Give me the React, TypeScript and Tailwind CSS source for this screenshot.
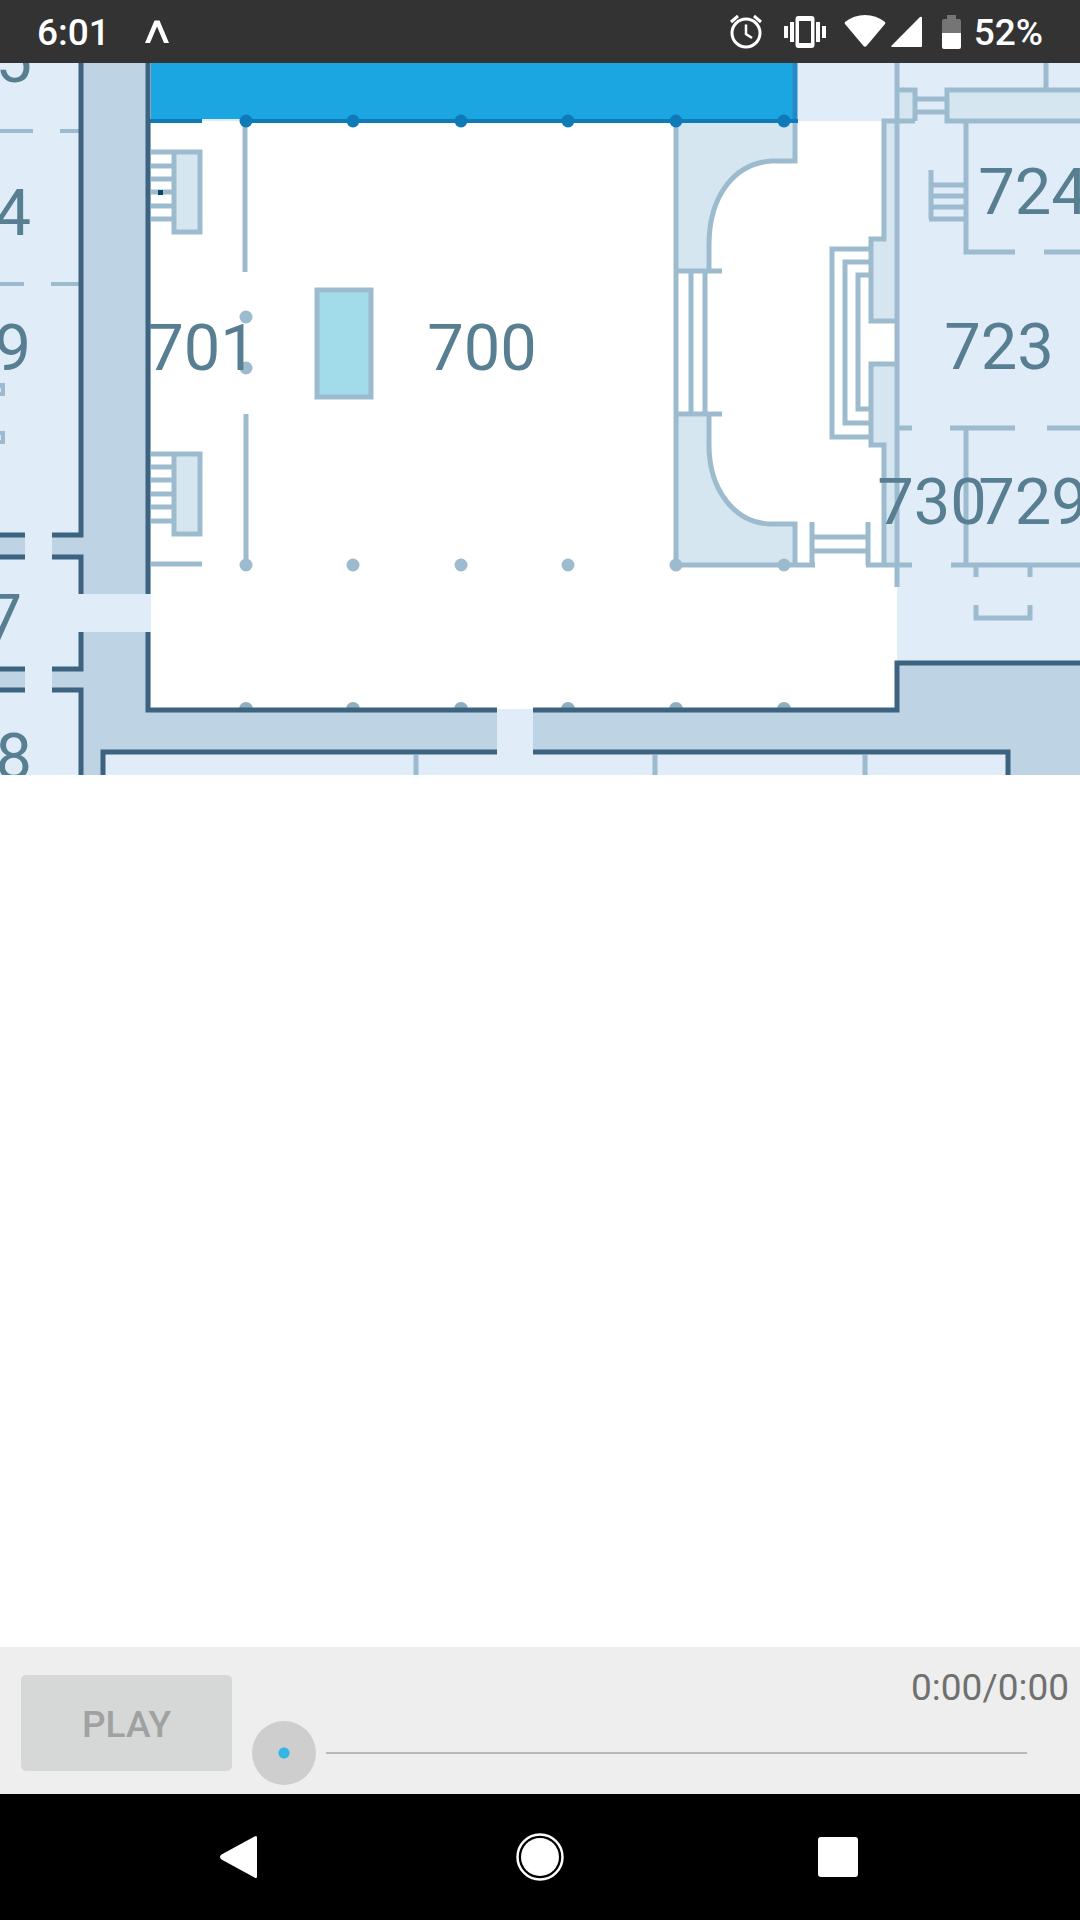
import React from "react";

const COLUMNS = [246, 353, 461, 568, 676, 784];

const ROOMS = [
  { name: "701", x: 202, y: 370 },
  { name: "700", x: 482, y: 370 },
  { name: "724", x: 1033, y: 214 },
  { name: "723", x: 999, y: 369 },
  { name: "730", x: 932, y: 524 },
  { name: "729", x: 1033, y: 524 },
];

const EDGE_ROOMS = [
  { name: "5", x: 32, y: 82 },
  { name: "4", x: 31, y: 235 },
  { name: "9", x: 31, y: 370 },
  { name: "7", x: 22, y: 640 },
  { name: "8", x: 32, y: 779 },
];

function StatusBar() {
  return (
    <header className="flex h-[63px] items-center bg-[#333333] pl-[37px] pr-[37px] text-[37px] leading-[44px] font-medium text-white">
      <span className="pt-[2px]">6:01</span>
      <svg className="ml-[35px] h-[24px] w-[24px]" viewBox="0 0 24 24" fill="#fff" aria-label="Notification">
        <path d="M9.5 0.500h5L24 23h-5L12 6.500 5 23H0z" />
      </svg>
      <div className="ml-auto flex items-center">
        <svg className="h-[36px] w-[32px]" viewBox="0 0 32 36" fill="none" stroke="#fff" aria-label="Alarm">
          <circle cx="16" cy="19" r="14" strokeWidth="3" />
          <path d="M16 10.500v9.500l6 4" strokeWidth="2.500" />
          <path d="M1 8l7-6M31 8l-7-6" strokeWidth="3" />
        </svg>
        <svg className="ml-[22px] h-[32px] w-[42px]" viewBox="0 0 42 32" fill="#fff" aria-label="Vibrate">
          <path d="M0 10h4v12H0zM6 6h4v20H6zM32 6h4v20h-4zM38 10h4v12h-4z" />
          <path fillRule="evenodd" d="M14.500 0h13a3 3 0 0 1 3 3v26a3 3 0 0 1-3 3h-13a3 3 0 0 1-3-3V3a3 3 0 0 1 3-3zM15 5v22h12V5z" />
        </svg>
        <svg className="ml-[18px] h-[34px] w-[42px]" viewBox="0 0 42 34" fill="#fff" aria-label="Wi-Fi">
          <path d="M1 7Q.3 8 1 9l18.500 22q1.500 1.400 3 0L41 9q.7-1 0-2Q32 0 21 0T1 7z" />
        </svg>
        <svg className="ml-[5px] h-[32px] w-[31px]" viewBox="0 0 31 32" fill="#fff" aria-label="Signal">
          <path d="M29 1q2-1 2 1v28q0 1-1 1H1.500Q-.5 31 .7 29.500z" />
        </svg>
        <svg className="ml-[20px] h-[34px] w-[19px]" viewBox="0 0 19 34" aria-label="Battery">
          <path d="M5 0h9v4h3q2 0 2 2v12H0V6q0-2 2-2h3z" fill="#757575" />
          <path d="M0 18h19v14q0 2-2 2H2q-2 0-2-2z" fill="#fff" />
        </svg>
        <span className="ml-[13px] pt-[2px]">52%</span>
      </div>
    </header>
  );
}

function FloorMap() {
  return (
    <svg className="block h-auto w-full" viewBox="0 63 1080 712" role="img" aria-label="Floor plan">
      <rect x="0" y="63" width="1080" height="712" fill="#e0ecf8" />

      {/* masonry */}
      <g fill="#bed3e4">
        <path d="M82 63H148V594H82zM82 632H148V710H897V663H1080V775H1008V752H103V775H82z" />
        <path d="M0 535H25V557H0zM52 535H83V557H52zM0 669H25V690H0zM52 669H83V690H52z" />
      </g>
      <path d="M497 707H533V756H497z" fill="#e0ecf8" />

      {/* main hall */}
      <path d="M151 120H897V709H151z" fill="#fff" />
      <path d="M151 119H882V121H151z" fill="#e0ecf8" />

      {/* niches */}
      <g fill="#d6e6f0">
        <path d="M676 121H795V161H772C735 163 709 195 709 245V270H676z" />
        <path d="M676 414H709V445C709 490 735 524 772 524H795V565H676z" />
        <path d="M884 121H897V321H871V239H884zM897 364H871V445H884V565H897z" />
        <path d="M897 90H915V121H897zM947 90H1080V121H947z" />
        <path d="M174 152H200V232H174zM174 454H200V534H174z" />
      </g>

      {/* thin partitions */}
      <g fill="none" stroke="#9dbbce" strokeWidth="5">
        <path d="M676 121V565H815M795 121V161H772C735 163 709 195 709 245V271M674 271H722M691 271V414M705 271V414M674 414H722M709 414V445C709 490 735 524 772 524H795V565" />
        <path d="M812 522V565M812 537H868M812 551H868M868 522V565M866 565H912" />
        <path d="M897 63V587M915 121H884V239H871V321H897M897 364H871V445H884V565" />
        <path d="M871 249H832V437H871M871 262H845V423H871M871 275H858V409H871" />
        <path d="M897 90H915V121M915 99H947M915 112H947M1080 90H947V121H1080M1046 63V90" />
        <path d="M966 121V252H1015M1044 252H1080M931 170V219M931 185H966M931 196H966M931 207H966M929 219H966" />
        <path d="M895 428H912M950 428H1015M1047 428H1080M966 428V565M951 565H1080" />
        <path d="M976 565V577M1030 565V577M976 605V618H1030V605" />
        <path d="M245 124V272M246 414V565M151 564H202" strokeWidth="5" />
        <path d="M0 131H33M60 131H82M0 284H24M51 284H82" strokeWidth="4" />
        <path d="M151 152H200V232H174V152M151 166H174M151 179H174M151 192H174M151 206H174M151 219H174" strokeWidth="5" />
        <path d="M151 454H200V534H174V454M151 467H174M151 480H174M151 494H174M151 507H174M151 521H174" strokeWidth="5" />
        <path d="M416 755V775M655 755V775M865 755V775" strokeWidth="5" />
      </g>
      <path d="M0 383H5V396H0zM0 431H5V444H0z" fill="#9dbbce" />
      <path d="M0 388H1V392H0zM0 435H1V440H0z" fill="#d6e6f0" />
      <rect x="317" y="290" width="54" height="107" fill="#a2dcea" stroke="#9dbbce" strokeWidth="5" />
      <rect x="158" y="190" width="5" height="5" fill="#0d4569" />

      {/* highlighted room */}
      <path d="M151 63H795V119H151z" fill="#1ca6e1" />
      <path d="M795 63V121" stroke="#2789c4" strokeWidth="5" />
      <path d="M148 121H202M240 121H798" stroke="#0f7ab8" strokeWidth="4" />
      <g fill="#0f7ab8">
        {COLUMNS.map((x) => (
          <circle key={x} cx={x} cy="121" r="6.500" />
        ))}
      </g>

      {/* pillars */}
      <g fill="#9dbbce">
        {COLUMNS.map((x) => (
          <circle key={x} cx={x} cy="565" r="6.500" />
        ))}
        <circle cx="246" cy="317" r="6.500" />
        <circle cx="246" cy="368" r="6.500" />
        {COLUMNS.map((x) => (
          <path key={x} d={`M${x - 7} 709a7 7 0 0 1 14 0z`} fill="#8faebf" />
        ))}
      </g>

      {/* outer walls */}
      <g fill="none" stroke="#3c637f" strokeWidth="5">
        <path d="M81 63V535H52M0 535H25M0 557H25M52 557H81V594M81 632V669H52M0 669H25M0 690H25M52 690H81V775" />
        <path d="M148 63V594M148 632V710H497M533 710H897V663H1080" />
        <path d="M103 775V752H497M533 752H1008V775" />
      </g>

      <g className="font-[Roboto,sans-serif] text-[65px]" fill="#587e92">
        {ROOMS.map((r) => (
          <text key={r.name} x={r.x} y={r.y} textAnchor="middle">
            {r.name}
          </text>
        ))}
        {EDGE_ROOMS.map((r) => (
          <text key={r.name} x={r.x} y={r.y} textAnchor="end">
            {r.name}
          </text>
        ))}
      </g>
    </svg>
  );
}

function Player() {
  return (
    <section className="flex h-[147px] bg-[#eeeeee] pl-[21px]" aria-label="Audio player">
      <button
        type="button"
        disabled
        className="mt-[28px] h-[96px] w-[211px] shrink-0 rounded-[5px] bg-[#d6d8d7] pt-[4px] text-[37px] font-medium text-[#a0a1a1]"
      >
        PLAY
      </button>
      <div className="ml-[20px] flex min-w-0 flex-1 flex-col">
        <output className="mt-[19px] mr-[11px] text-right text-[37px] leading-[44px] text-[#707070]">0:00/0:00</output>
        <div className="mt-[11px] mr-[53px] flex">
          <input
            type="range"
            min="0"
            max="100"
            defaultValue="0"
            aria-label="Position"
            className="h-[64px] w-full appearance-none bg-[linear-gradient(to_right,transparent_74px,#b9b9b9_74px)] bg-[length:100%_2px] bg-center bg-no-repeat [&::-webkit-slider-thumb]:size-[64px] [&::-webkit-slider-thumb]:appearance-none [&::-webkit-slider-thumb]:rounded-full [&::-webkit-slider-thumb]:bg-[radial-gradient(circle,#33b5e5_5px,#cecece_6px)]"
          />
        </div>
      </div>
    </section>
  );
}

function NavBar() {
  return (
    <nav className="flex h-[126px] items-center bg-black px-[8.33%]" aria-label="System">
      <button type="button" aria-label="Back" className="flex h-full flex-1 items-center justify-center">
        <svg className="size-[48px]" viewBox="0 0 48 48" fill="#fff">
          <path d="M38.500 3.500q2.500-1.500 2.500 1v39q0 2.500-2.500 1L5.500 26.500q-3-2.500 0-5z" />
        </svg>
      </button>
      <button type="button" aria-label="Home" className="flex h-full flex-1 items-center justify-center">
        <svg className="size-[48px]" viewBox="0 0 48 48">
          <circle cx="24" cy="24" r="22.500" fill="none" stroke="#fff" strokeWidth="2.500" />
          <circle cx="24" cy="24" r="19" fill="#fff" />
        </svg>
      </button>
      <button type="button" aria-label="Recents" className="flex h-full flex-1 items-center justify-center">
        <svg className="size-[48px]" viewBox="0 0 48 48" fill="#fff">
          <rect x="2" y="4" width="40" height="40" rx="3" />
        </svg>
      </button>
    </nav>
  );
}

export default function App() {
  return (
    <div className="flex min-h-screen flex-col bg-white font-[Roboto,sans-serif]">
      <StatusBar />
      <main className="flex-1 overflow-hidden">
        <FloorMap />
      </main>
      <Player />
      <NavBar />
    </div>
  );
}
